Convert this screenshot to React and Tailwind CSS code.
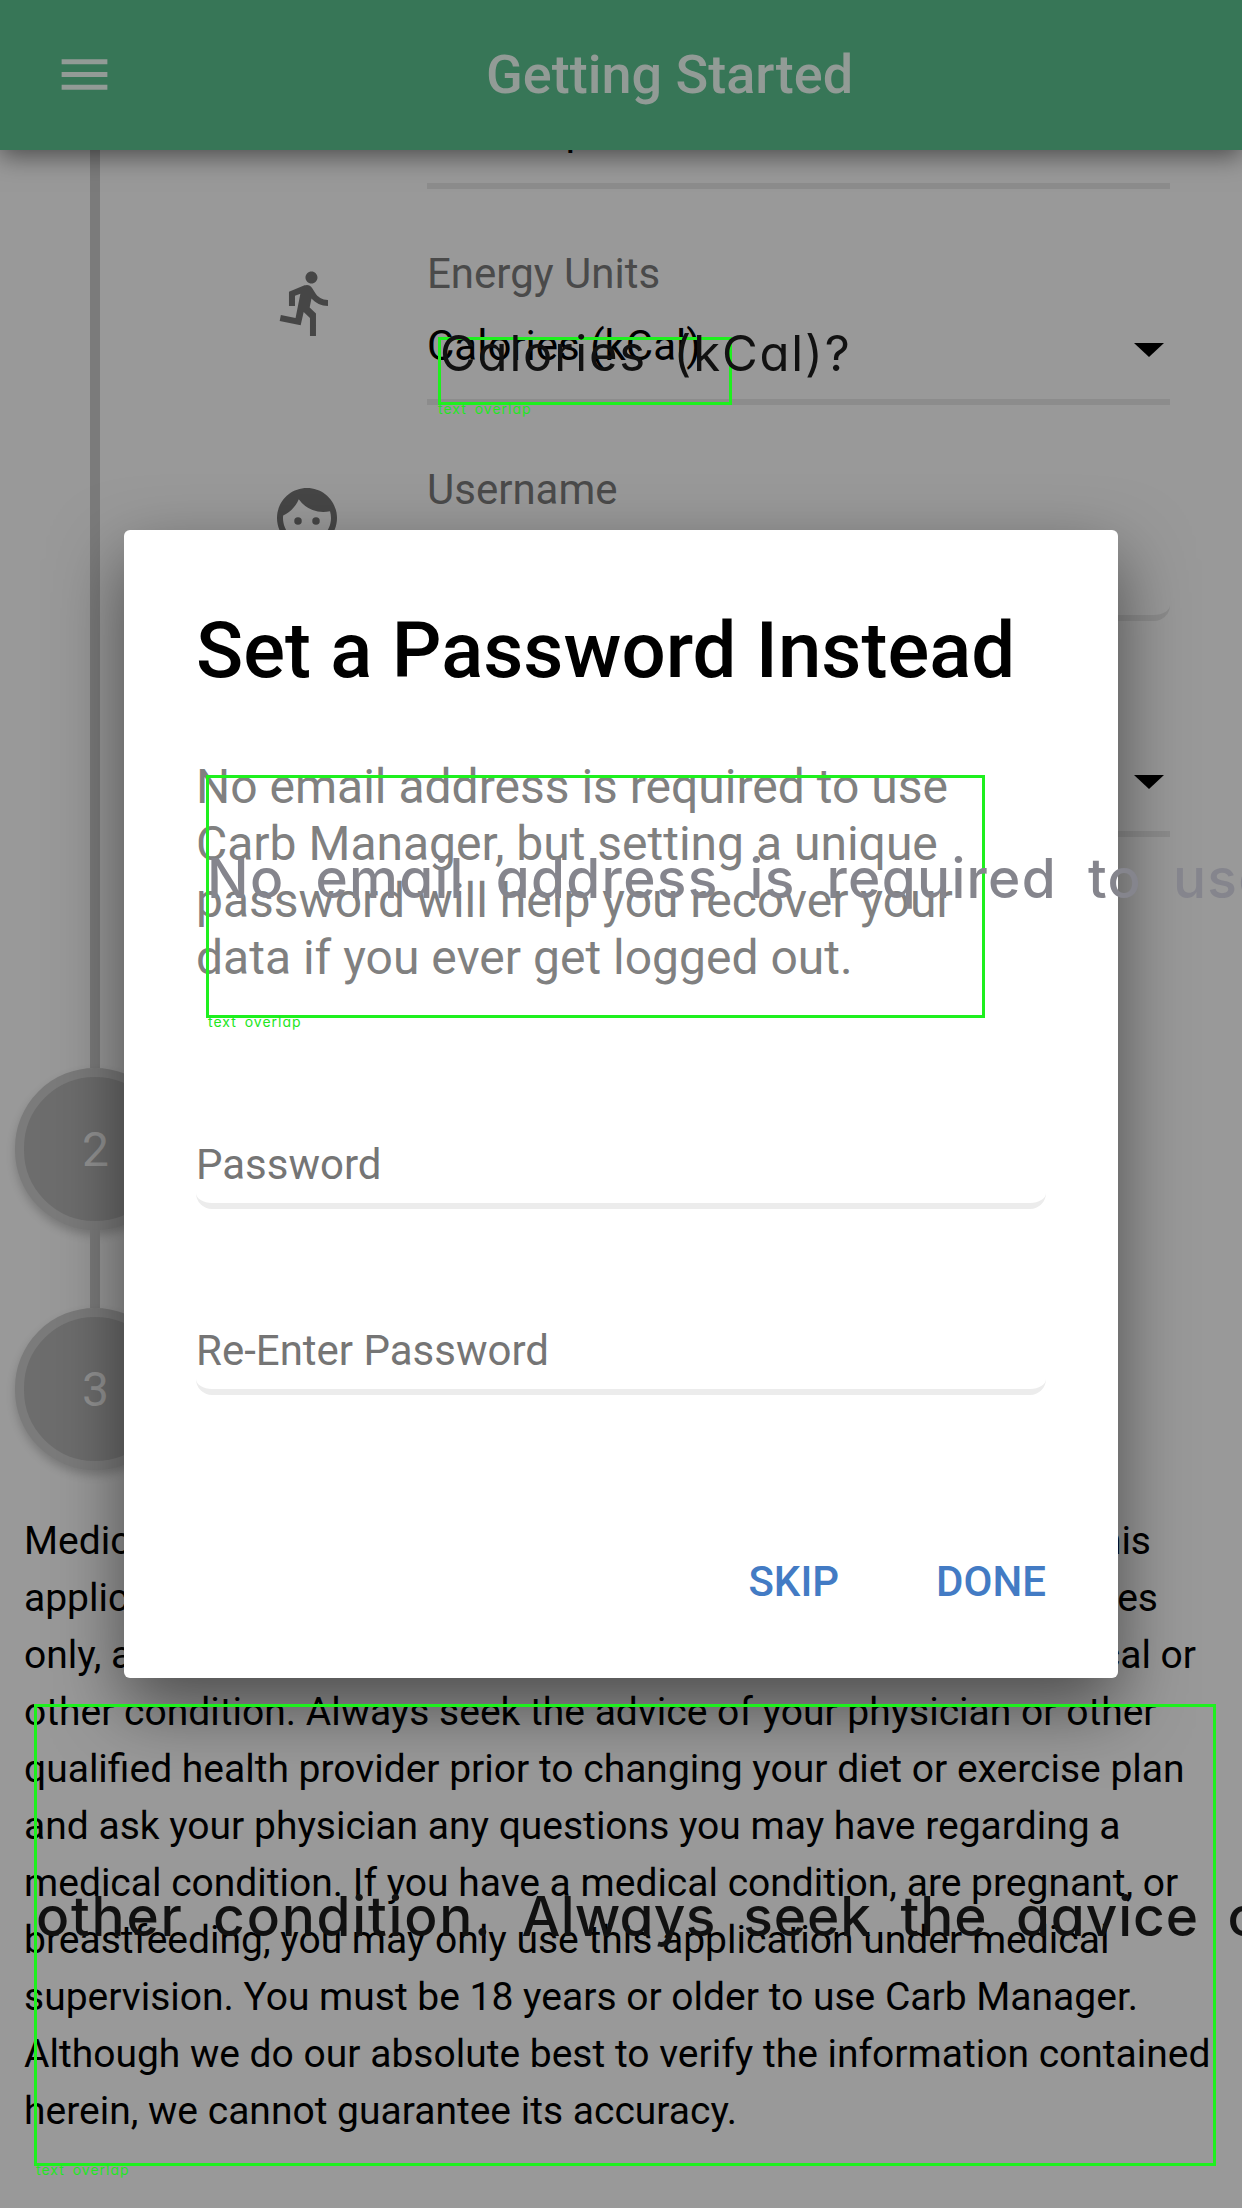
import { MdMenu, MdDirectionsRun, MdFace } from "react-icons/md";

const DISCLAIMER = [
  "Medical Disclaimer: The information provided by this",
  "application is intended for informational purposes",
  "only, and is not intended to treat any medical or",
  "other condition. Always seek the advice of your physician or other",
  "qualified health provider prior to changing your diet or exercise plan",
  "and ask your physician any questions you may have regarding a",
  "medical condition. If you have a medical condition, are pregnant, or",
  "breastfeeding, you may only use this application under medical",
  "supervision. You must be 18 years or older to use Carb Manager.",
  "Although we do our absolute best to verify the information contained",
  "herein, we cannot guarantee its accuracy.",
];

// The part of the first three lines that the dialog leaves free on the right.
const LINE_ENDS = ["this", "purposes", "medical or"];
const LINE_END_WIDTHS = ["w-[1127px]", "w-[1134px]", "w-[1172px]"];

function Arrow() {
  return (
    <svg className="mt-[8px] mr-[6px] h-[14px] w-[30px]" viewBox="0 0 30 14">
      <path d="M0 0H30L15 14Z" fill="#000" />
    </svg>
  );
}

function Row({ icon, label, value, select, rounded }) {
  return (
    <div className="flex h-[216px] shrink-0 pl-[427px]">
      <div className="-ml-[156px] flex w-[156px] shrink-0 pt-[77px]">{icon}</div>
      <div
        className={
          "flex w-[743px] flex-col border-b-[6px] border-[#8c8c8c] " +
          (rounded ? "rounded-b-[16px]" : "")
        }
      >
        <div className="mt-[60px] h-[50px] text-[42px] leading-[50px] text-[#4a4a4a]">{label}</div>
        <div className="mt-[22px] flex h-[50px] items-center justify-between text-[42px] leading-[50px]">
          <span>{value}</span>
          {select && <Arrow />}
        </div>
      </div>
    </div>
  );
}

function Step({ n }) {
  return (
    <div className="ml-[15px] flex h-[162px] w-[160px] shrink-0 items-center justify-center rounded-full border-[9px] border-[#7b7b7b] bg-[#6d6d6d] pt-[1px] pl-[1px] text-[48px] text-[#929292] shadow-[0_5px_10px_rgba(0,0,0,0.2)]">
      {n}
    </div>
  );
}

function Field({ label }) {
  return (
    <div className="mb-[35px] flex h-[151px] flex-col justify-end rounded-[16px] border-b-[6px] border-[#ececec] pb-[13px] text-[42px] leading-[50px] text-[#757575]">
      {label}
    </div>
  );
}

export default function App() {
  return (
    <div className="relative h-[2208px] w-[1242px] overflow-hidden bg-[#999] font-['Roboto',sans-serif] text-black">
      <header className="relative z-10 flex h-[150px] items-center bg-[#377657] pb-[1px] text-[#929b96] shadow-[0_6px_24px_rgba(0,0,0,0.5)]">
        <MdMenu className="ml-[54px] size-[61px]" />
        <h1 className="ml-[371px] text-[54px] font-medium">Getting Started</h1>
      </header>

      <div className="flex h-[1359px]">
        <div className="-mr-[175px] flex w-[175px] shrink-0 flex-col">
          <div className="ml-[90px] h-[918px] w-[10px] bg-[#7b7b7b]" />
          <Step n="2" />
          <div className="ml-[90px] h-[78px] w-[10px] bg-[#7b7b7b]" />
          <Step n="3" />
        </div>
        <div className="-mt-[177px] flex w-full flex-col">
          <Row label="" value="US / Imperial" />
          <Row icon={<MdDirectionsRun className="mt-[1px] size-[72px] text-[#464646]" />} label="Energy Units" value="Calories (kCal)" select />
          <Row icon={<MdFace className="size-[72px] text-[#464646]" />} label="Username" value="" rounded />
          <Row label="" value="" select />
        </div>
      </div>

      <div className="pl-[24px] pt-[4px] text-[39px] leading-[57px] whitespace-nowrap">
        {DISCLAIMER.map((t, i) =>
          i < 3 ? (
            <div key={t} className={"flex justify-between " + LINE_END_WIDTHS[i]}>
              <span>{t.slice(0, t.length - LINE_ENDS[i].length)}</span>
              <span>{LINE_ENDS[i]}</span>
            </div>
          ) : (
            <div key={t}>{t}</div>
          )
        )}
      </div>

      <section className="absolute top-[530px] left-[124px] z-20 flex h-[1148px] w-[994px] flex-col rounded-[6px] bg-white px-[72px] shadow-[0_28px_70px_rgba(0,0,0,0.5)]">
        <h2 className="mt-[75px] h-[92px] text-[78px] leading-[92px] font-medium whitespace-nowrap">Set a Password Instead</h2>
        <p className="mt-[61px] mb-[72px] text-[48px] leading-[57px] whitespace-nowrap text-[#808080]">
          No email address is required to use<br />
          Carb Manager, but setting a unique<br />
          password will help you recover your<br />
          data if you ever get logged out.
        </p>
        <Field label="Password" />
        <Field label="Re-Enter Password" />
        <div className="mt-[127px] flex justify-end gap-[97px] text-[42px] leading-[50px] font-medium text-[#437bc4]">
          <span>SKIP</span>
          <span>DONE</span>
        </div>
      </section>

      <div className="absolute inset-0 z-30 overflow-hidden font-['Inter',sans-serif] whitespace-pre [font-feature-settings:'cv11']">
        <div className="absolute top-[337px] left-[438px] h-[68px] w-[294px] border-[3px] border-[#1ef01e]" />
        <div className="absolute top-[775px] left-[206px] h-[243px] w-[779px] border-[3px] border-[#1ef01e]" />
        <div className="absolute top-[1704px] left-[34px] h-[462px] w-[1182px] border-[3px] border-[#1ef01e]" />
        <div className="absolute top-[324px] left-[440px] text-[49px] leading-[60px] tracking-[1.8px] text-[#111] [word-spacing:11px]">Calories (kCal)?</div>
        <div className="absolute top-[845px] left-[207px] text-[55px] leading-[66px] font-medium tracking-[1.3px] text-[#85858d] [word-spacing:15px]">No email address is required to use</div>
        <div className="absolute top-[1883px] left-[36px] text-[55px] leading-[66px] font-medium text-[#111] [word-spacing:13px]">
          <span className="tracking-[1.8px]">other condition. </span>
          <span className="tracking-[0.2px]">Always </span>
          <span className="tracking-[0.9px]">seek the aavice of</span>
        </div>
        <div className="absolute top-[400px] left-[438px] text-[14px] leading-[18px] tracking-[1px] text-[#22e622] [word-spacing:3px]">text overlap</div>
        <div className="absolute top-[1013px] left-[208px] text-[14px] leading-[18px] tracking-[1px] text-[#22e622] [word-spacing:3px]">text overlap</div>
        <div className="absolute top-[2161px] left-[36px] text-[14px] leading-[18px] tracking-[1px] text-[#22e622] [word-spacing:3px]">text overlap</div>
      </div>
    </div>
  );
}
